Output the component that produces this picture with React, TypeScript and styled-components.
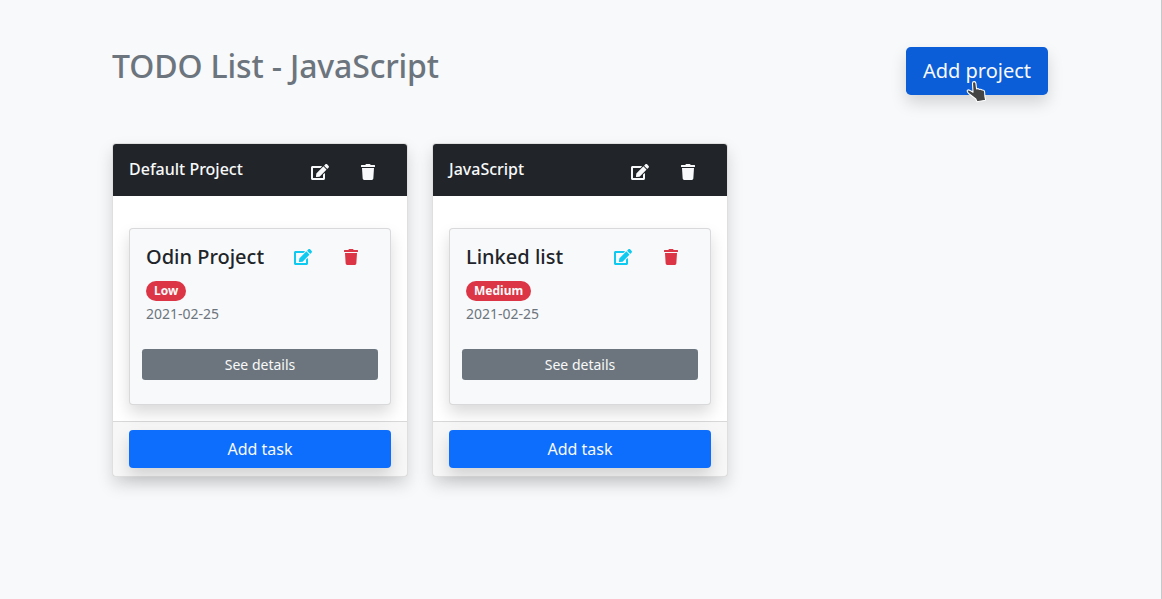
import React from 'react';
import styled, { createGlobalStyle } from 'styled-components';
import { FaEdit, FaTrash } from 'react-icons/fa';

const GlobalStyle = createGlobalStyle`
  *, *::before, *::after { box-sizing: border-box; }
  body {
    margin: 0;
    background: #f8f9fa;
    color: #212529;
    font-family: 'Noto Sans', 'Liberation Sans', sans-serif;
    font-size: 16px;
    line-height: 1.5;
  }
`;

const SHADOW = '0 8px 16px rgba(0, 0, 0, 0.15)';

const Page = styled.main`
  min-height: 599px;
  padding: 47px 113px 0 112px;
  border-right: 1px solid #c6c8ca;
  background: #f8f9fb;
`;

const TopBar = styled.header`
  display: flex;
  justify-content: space-between;
  align-items: flex-start;
  height: 96px;
`;

const Title = styled.h2`
  margin: 0;
  font-size: 32px;
  font-weight: 500;
  line-height: 38.4px;
  letter-spacing: -0.14px;
  color: #6c757d;
`;

const Button = styled.button<{ $size?: 'sm' | 'lg'; $tone?: string }>`
  position: relative;
  display: block;
  width: ${p => (p.$size === 'lg' ? '142px' : '100%')};
  height: ${p => (p.$size === 'lg' ? 48 : p.$size === 'sm' ? 31 : 38)}px;
  padding: 0;
  border: 0;
  border-radius: ${p => (p.$size === 'lg' ? 4.8 : p.$size === 'sm' ? 3.2 : 4)}px;
  background: ${p => p.$tone || '#0d6efd'};
  color: #f8f9fa;
  font-family: inherit;
  font-size: ${p => (p.$size === 'lg' ? 20 : p.$size === 'sm' ? 14 : 16)}px;
  line-height: 1.5;
  cursor: pointer;
  box-shadow: ${p => (p.$size === 'sm' ? 'none' : SHADOW)};
`;

const Pointer = styled.svg`
  position: absolute;
  left: 60px;
  top: 33px;
  width: 21px;
  height: 24px;
`;

const Board = styled.section`
  display: flex;
  align-items: flex-start;
  gap: 24px;
`;

const Card = styled.article`
  width: 296px;
  border: 1px solid rgba(0, 0, 0, 0.125);
  border-radius: 4px;
  background: #fff;
  box-shadow: ${SHADOW};
`;

const CardHeader = styled.div`
  display: flex;
  height: 52px;
  padding: 13px 32px 0 16px;
  border-radius: 3px 3px 0 0;
  background: #212529;
  color: #f8f9fa;
`;

const CardTitle = styled.h6`
  flex: 1;
  margin: 0;
  font-size: 16px;
  font-weight: 500;
  line-height: 24px;
`;

const Actions = styled.div<{ $edit: string; $trash: string }>`
  display: flex;
  gap: 32px;
  svg { height: 16px; }
  svg:first-child { width: 18px; color: ${p => p.$edit}; }
  svg:last-child { width: 14px; color: ${p => p.$trash}; }
`;

const HeaderActions = styled(Actions)`
  padding-top: 7px;
`;

const CardBody = styled.div`
  padding: 32px 16px 16px;
`;

const Task = styled.div`
  height: 177px;
  padding: 16px 12px 0;
  border: 1px solid rgba(0, 0, 0, 0.125);
  border-radius: 4px;
  background: #f8f9fb;
  box-shadow: ${SHADOW};
`;

const TaskInfo = styled.div`
  height: 104px;
  padding: 0 4px;
`;

const TaskHead = styled.div`
  display: flex;
  justify-content: space-between;
  height: 32px;
  padding-right: 16px;
`;

const TaskTitle = styled.h5`
  margin: 0;
  font-size: 20px;
  font-weight: 500;
  line-height: 24px;
`;

const TaskActions = styled(Actions)`
  padding-top: 4px;
`;

const Badge = styled.span`
  display: block;
  width: fit-content;
  height: 20px;
  margin-top: 4px;
  padding: 0 8px;
  border-radius: 10px;
  background: #dc3545;
  color: #f8f9fa;
  font-size: 12px;
  font-weight: 700;
  line-height: 19px;
`;

const DueDate = styled.div`
  margin-top: 2px;
  color: #6c757d;
  font-size: 14px;
  line-height: 21px;
`;

const CardFooter = styled.div`
  padding: 8px 16px;
  border-top: 1px solid rgba(0, 0, 0, 0.125);
  background: rgba(0, 0, 0, 0.03);
`;

const projects = [
  { name: 'Default Project', task: 'Odin Project', priority: 'Low', due: '2021-02-25' },
  { name: 'JavaScript', task: 'Linked list', priority: 'Medium', due: '2021-02-25' },
];

export default function App() {
  return (
    <>
      <GlobalStyle />
      <Page>
        <TopBar>
          <Title>TODO List - JavaScript</Title>
          <Button $size="lg" $tone="#0b5ed7">
            Add project
            <Pointer viewBox="0 0 21 24">
              <path
                d="M6.5 3.4Q6.5 1.6 8.1 1.6T9.9 3.2L10.6 9Q12 8.2 13.4 9.4Q15 8.8 16 10Q18.4 9.7 18.6 12L18.9 16.4L19.6 20.2L11 21.7L9.8 19L3 13.8Q.6 11.4 1.4 10.3Q2.4 9.3 4.2 10.6L7 12.2Z"
                fill="#444"
                stroke="#fff"
                strokeWidth="1.1"
                strokeLinejoin="round"
              />
            </Pointer>
          </Button>
        </TopBar>
        <Board>
          {projects.map(p => (
            <Card key={p.name}>
              <CardHeader>
                <CardTitle>{p.name}</CardTitle>
                <HeaderActions $edit="#f8f9fa" $trash="#f8f9fa">
                  <FaEdit />
                  <FaTrash />
                </HeaderActions>
              </CardHeader>
              <CardBody>
                <Task>
                  <TaskInfo>
                    <TaskHead>
                      <TaskTitle>{p.task}</TaskTitle>
                      <TaskActions $edit="#0dcaf0" $trash="#dc3545">
                        <FaEdit />
                        <FaTrash />
                      </TaskActions>
                    </TaskHead>
                    <Badge>{p.priority}</Badge>
                    <DueDate>{p.due}</DueDate>
                  </TaskInfo>
                  <Button $size="sm" $tone="#6c757d">See details</Button>
                </Task>
              </CardBody>
              <CardFooter>
                <Button>Add task</Button>
              </CardFooter>
            </Card>
          ))}
        </Board>
      </Page>
    </>
  );
}
